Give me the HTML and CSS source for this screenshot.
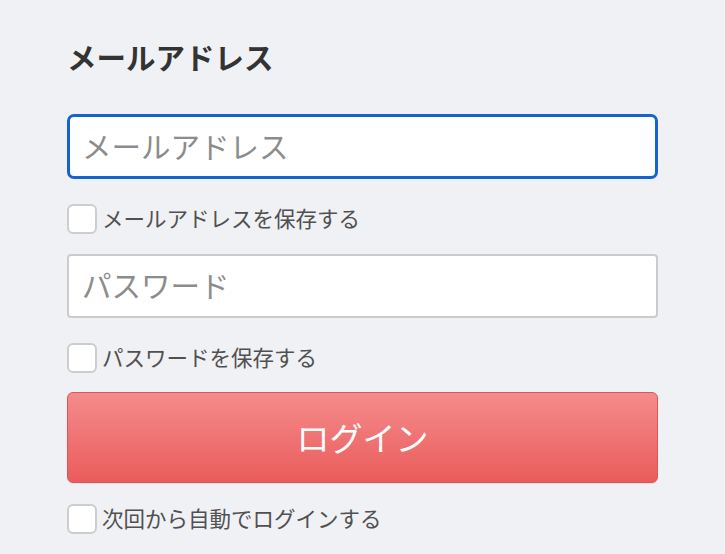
FILE: index.html
```html
<!DOCTYPE html>
<html lang="ja">
<head>
<meta charset="utf-8">
<title>ログイン</title>
<link rel="stylesheet" href="styles.css">
</head>
<body>
<form class="login">
  <h2 class="heading">メールアドレス</h2>
  <input class="field field-focused" type="email" placeholder="メールアドレス">
  <label class="check check-first"><input type="checkbox" class="box"><span>メールアドレスを保存する</span></label>
  <input class="field field-pass" type="password" placeholder="パスワード">
  <label class="check check-second"><input type="checkbox" class="box"><span>パスワードを保存する</span></label>
  <button type="button" class="submit">ログイン</button>
  <label class="check check-third"><input type="checkbox" class="box"><span>次回から自動でログインする</span></label>
</form>
</body>
</html>
```
FILE: styles.css
```css
html, body {
  margin: 0;
  padding: 0;
  background: #f0f1f5;
  height: 100%;
}
body {
  font-family: "Noto Sans CJK JP", "Noto Sans", sans-serif;
}
.login {
  display: flex;
  flex-direction: column;
  padding: 38px 67px 0 67px;
  width: 591px;
}
.heading {
  margin: 0;
  font-size: 29.5px;
  line-height: 36px;
  font-weight: 700;
  color: #333333;
}
.field {
  box-sizing: border-box;
  width: 591px;
  height: 64px;
  margin: 40px 0 0 0;
  padding: 0 0 4px 13px;
  background: #ffffff;
  border: 2px solid #cbcbcb;
  border-radius: 4px;
  font-family: inherit;
  font-size: 29.5px;
  color: #333;
  outline: none;
}
.field::placeholder {
  color: #8c8c8c;
}
.field-focused {
  height: 65px;
  border: 3px solid #1463d0;
  border-radius: 7px;
  padding-left: 12px;
}
.field-pass {
  margin-top: 20px;
}
.check {
  display: flex;
  align-items: center;
  gap: 5px;
  height: 30px;
  font-size: 21.5px;
  color: #505050;
}
.check span {
  padding-bottom: 4px;
}
.check-first { margin-top: 25px; }
.check-second { margin-top: 25px; }
.check-third { margin-top: 21px; }
.box {
  appearance: none;
  -webkit-appearance: none;
  box-sizing: border-box;
  width: 30px;
  height: 30px;
  margin: 0;
  background: #ffffff;
  border: 2px solid #cdcdcd;
  border-radius: 6px;
  flex: none;
}
.submit {
  margin-top: 19px;
  width: 591px;
  height: 91px;
  padding-bottom: 3px;
  border: 1.5px solid #d9575a;
  border-radius: 6px;
  background: linear-gradient(#f58b8b, #ea5c5c);
  color: #ffffff;
  font-family: inherit;
  font-size: 33px;
  box-shadow: 0 1px 1px rgba(0,0,0,0.08);
}
```
